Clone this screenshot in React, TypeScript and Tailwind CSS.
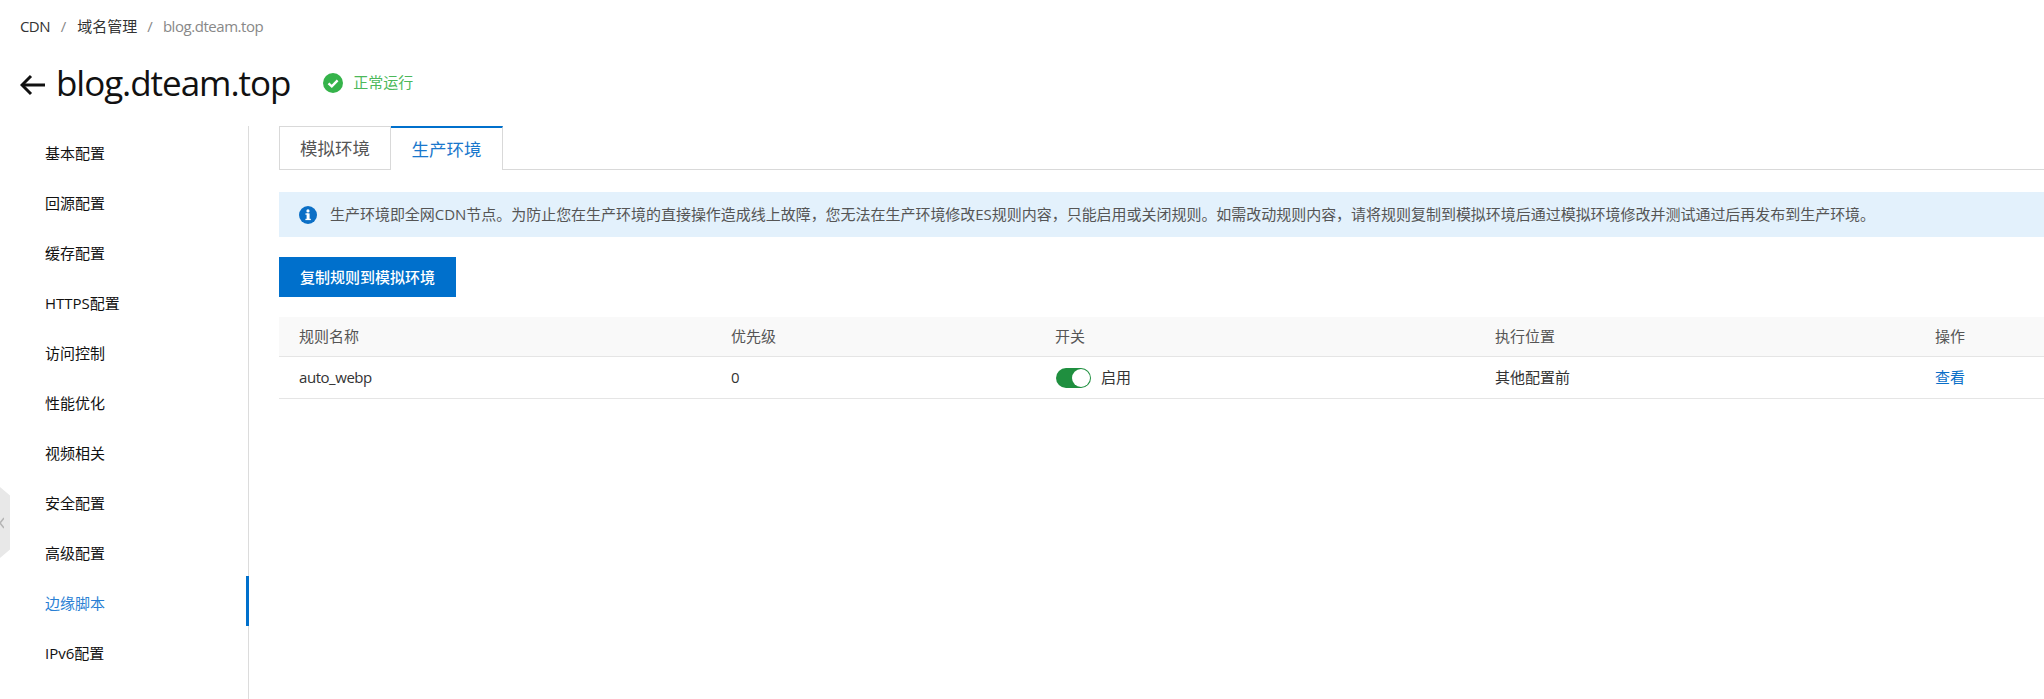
import React from "react";

const F = { fontFamily: '"Open Sans","Noto Sans CJK SC",sans-serif' };
const items = ["基本配置","回源配置","缓存配置","HTTPS配置","访问控制","性能优化","视频相关","安全配置","高级配置","边缘脚本","IPv6配置"];
const alertText = "生产环境即全网CDN节点。为防止您在生产环境的直接操作造成线上故障，您无法在生产环境修改ES规则内容，只能启用或关闭规则。如需改动规则内容，请将规则复制到模拟环境后通过模拟环境修改并测试通过后再发布到生产环境。";

export default function App() {
  return (
    <div className="relative w-full h-[699px] overflow-hidden bg-white text-[15px] text-[#333]" style={F}>
      <div className="absolute left-0 top-[487px] w-[10px] h-[71px] bg-[#e8e8e8] [clip-path:polygon(0_0,100%_12%,100%_88%,0_100%)] flex items-center">
        <svg width="4" height="14" viewBox="0 0 4 14" fill="none" stroke="#b5b5b5" strokeWidth="1.5"><path d="M4 2 L0 7 L4 12" /></svg>
      </div>

      <nav className="h-[52px] pl-5 flex items-center text-[15px] leading-none">
        <span className="tracking-[-0.6px]">CDN</span>
        <span className="ml-[11px] mr-[11px] text-[#888]">/</span>
        <span>域名管理</span>
        <span className="ml-[10px] mr-[10px] text-[#888]">/</span>
        <span className="text-[#888] tracking-[-0.45px]">blog.dteam.top</span>
      </nav>

      <header className="h-[60px] mb-[14px] pl-5 flex items-center text-[#111]">
        <svg width="25" height="22" viewBox="0 0 25 22" fill="none" stroke="#111" strokeWidth="3" className="mt-[6px]"><path d="M25 11 H2" /><path d="M11 2 L2 11 L11 20" /></svg>
        <h1 className="ml-[11px] text-[35px] leading-none tracking-[-1.05px]">blog.dteam.top</h1>
        <svg width="20" height="20" viewBox="0 0 20 20" className="ml-[33px] mt-[2px]"><circle cx="10" cy="10" r="10" fill="#35b34a" /><path d="M5.5 10.3 L8.8 13.4 L14.6 7.4" fill="none" stroke="#fff" strokeWidth="2.4" /></svg>
        <span className="ml-[10px] text-[#4cb85a]">正常运行</span>
      </header>

      <div className="flex h-[573px]">
        <aside className="w-[249px] shrink-0 border-r border-[#dcdcdc] text-[#111]">
          {items.map((t) => {
            const active = t === "边缘脚本";
            return (
              <div key={t} className={active ? "relative h-[50px] pl-[45px] pt-1 flex items-center text-[#2a7fd4]" : "relative h-[50px] pl-[45px] pt-1 flex items-center"}>
                {t}
                {active && <div className="absolute right-[-1px] top-0 w-[3px] h-[50px] bg-[#0070cc]" />}
              </div>
            );
          })}
        </aside>

        <main className="flex-1 min-w-0 pl-[30px]">
          <div className="flex h-[44px] border-b border-[#d9d9d9] text-[17.5px]">
            <div className="w-[112px] h-[44px] border border-[#d9d9d9] flex items-center justify-center text-[#555]">模拟环境</div>
            <div className="w-[112px] h-[44px] border-r border-[#d9d9d9] border-t-[2px] border-t-[#0070cc] bg-white flex items-center justify-center text-[#1a77cc]">生产环境</div>
          </div>

          <div className="mt-[22px] h-[45px] bg-[#e3f1fc] pl-5 flex items-center text-[#555] whitespace-nowrap">
            <svg width="18" height="18" viewBox="0 0 18 18" className="shrink-0"><circle cx="9" cy="9" r="9" fill="#0b6fc6" /><rect x="7.6" y="7.4" width="3" height="6.6" fill="#fff" /><rect x="6.4" y="7.4" width="3" height="1.3" fill="#fff" /><rect x="6.4" y="12.8" width="5.4" height="1.3" fill="#fff" /><circle cx="9" cy="4.9" r="1.6" fill="#fff" /></svg>
            <span className="ml-[13px] tracking-[-0.03px]">{alertText}</span>
          </div>

          <button className="mt-5 block w-[177px] h-[40px] bg-[#0070cc] text-white text-[15px] font-medium">复制规则到模拟环境</button>

          <div className="mt-5">
            <div className="grid grid-cols-[432px_324px_440px_440px_1fr] h-[40px] items-center bg-[#f9f9f9] border-b border-[#e5e5e5] text-[#555]">
              <div className="pl-5">规则名称</div>
              <div className="pl-5">优先级</div>
              <div className="pl-5">开关</div>
              <div className="pl-5">执行位置</div>
              <div className="pl-5">操作</div>
            </div>
            <div className="grid grid-cols-[432px_324px_440px_440px_1fr] h-[42px] items-center border-b border-[#e5e5e5]">
              <div className="pl-5 tracking-[-0.45px]">auto_webp</div>
              <div className="pl-5">0</div>
              <div className="pl-5 flex items-center">
                <div className="relative w-[35px] h-[20px] rounded-full bg-[#1f8f3f] ml-px">
                  <div className="absolute right-[1px] top-[1px] w-[18px] h-[18px] rounded-full bg-white" />
                </div>
                <span className="ml-[10px]">启用</span>
              </div>
              <div className="pl-5">其他配置前</div>
              <div className="pl-5 text-[#0a6fc8]">查看</div>
            </div>
          </div>
        </main>
      </div>
    </div>
  );
}
